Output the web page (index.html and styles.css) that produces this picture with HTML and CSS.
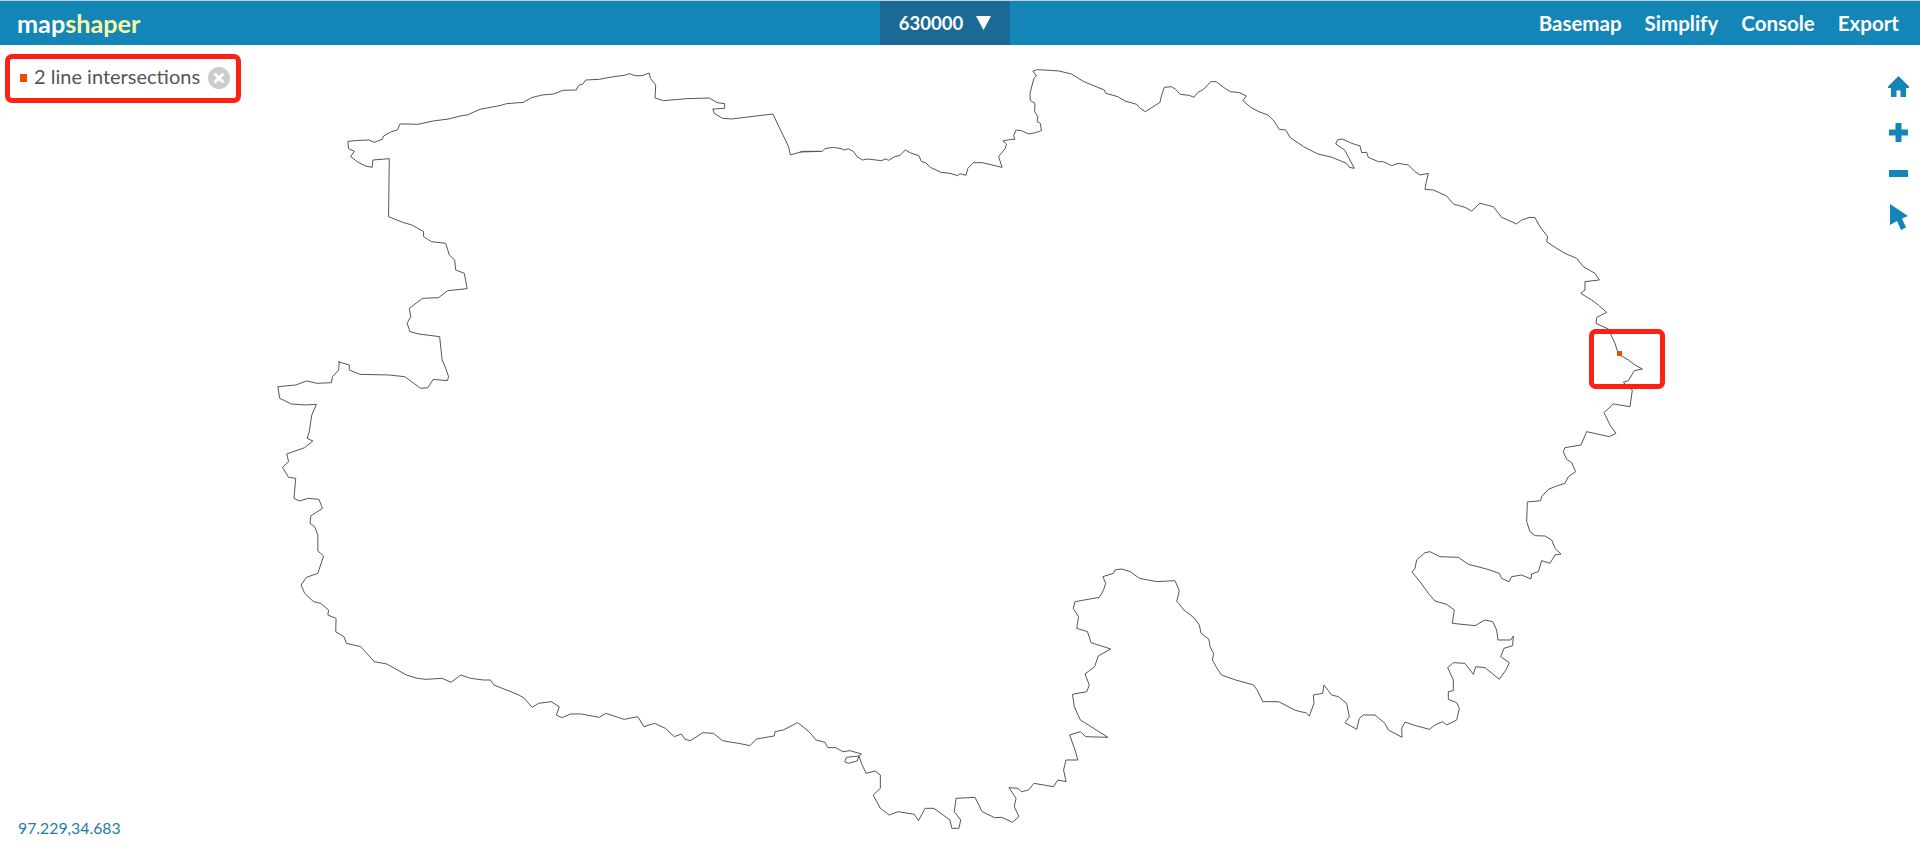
FILE: index.html
```html
<!DOCTYPE html>
<html>
<head>
    <title>mapshaper</title>
    <link rel="stylesheet" href="styles.css">
</head>
<body>
    <div class="page-header">
        <div class="logo">map<span class="logo-accent">shaper</span></div>
        <div class="layer-select">
            <span>630000</span>
            <svg class="layer-arrow" viewBox="0 0 15 14"><polygon points="0,0 15,0 7.5,14"/></svg>
        </div>
        <div class="nav-links">
            <span>Basemap</span>
            <span>Simplify</span>
            <span>Console</span>
            <span>Export</span>
        </div>
    </div>

    <div class="map-canvas">
        <svg class="map-shape" viewBox="0 45 1920 809">
            <!-- outline traced in pieces, each piece in the coordinates of its own crop -->
            <g transform="translate(260 60) scale(.35714 .33333)">
                <polyline class="border" points="360,470 362,296 316,300 314,322 295,318 272,305 254,290 264,274 248,266 246,244 280,241 305,240 320,247 342,238 346,228 368,215 385,210 392,192 415,192 442,193 485,183 528,177 565,167 580,165 616,148 650,141 672,137 690,131 738,127 760,113 790,105 822,102 848,91 886,90 892,76 904,72 912,60 950,58 990,50 1020,46 1035,41 1050,47 1070,47 1090,39 1093,55 1108,75 1106,114 1130,122 1195,116 1258,114 1280,128 1301,131 1301,145 1268,147 1272,160 1295,175 1320,177 1436,162 1480,260 1485,285 1520,274 1568,274"/>
                <polyline class="border" points="218,905 250,915 250,930 280,943 360,945 405,950 450,985 470,983 485,958 525,962 528,950 520,925 510,900 503,830 445,822 420,815 412,790 422,770 418,745 455,715 500,713 525,692 580,686 572,640 548,630 545,600 530,585 520,550 480,545 458,530 458,515 425,495 400,487 360,470"/>
            </g>
            <g transform="translate(800 60) scale(.35714 .33333)">
                <polyline class="border" points="0,276 62,274 70,266 92,262 115,266 125,270 135,266 150,275 160,290 175,300 190,297 212,300 228,302 240,297 248,301 265,290 280,286 295,270 310,279 333,287 340,305 352,308 365,322 395,337 420,340 442,347 448,341 465,346 470,325 485,308 510,308 566,322 556,290 575,265 578,252 568,243 590,238 602,238 598,228 605,210 620,212 640,222 660,218 676,212 673,190 664,185 666,170 657,155 658,130 645,122 644,100 650,75 655,55 662,48 652,33 665,29 700,31 725,33 760,42 795,65 852,90 856,100 890,110 910,123 943,133 950,143 967,155 1008,127 1012,108 1020,82 1040,80 1052,88 1065,103 1090,106 1103,112 1113,98 1130,88 1150,65 1165,65 1190,85 1205,95 1230,98 1250,108 1240,122 1262,142 1285,155 1310,165 1325,180 1342,208 1360,210 1372,232 1410,260 1450,282 1490,292 1530,310 1538,322 1552,325 1540,300 1525,270 1500,252 1505,240 1518,237 1545,250 1568,258"/>
            </g>
            <g transform="translate(1300 130) scale(.33333)">
                <polyline class="border" points="180,47 185,68 200,67 205,82 235,95 250,95 275,107 295,100 325,105 345,125 360,135 385,130 378,160 375,178 400,180 440,198 460,222 495,232 515,243 540,220 580,230 605,262 650,282 665,270 690,262 705,263 720,290 743,320 740,335 765,352 795,370 830,385 850,410 885,430 898,450 855,455 855,480 842,490 875,510 895,525 920,547 890,562 888,580 925,597 945,640 955,672 985,690 1005,705 1027,717 1003,722 985,752 970,757 997,780 990,830 940,822 912,848 930,885 948,910 928,920 860,905 843,945 795,953"/>
            </g>
            <g transform="translate(1300 400) scale(.33333)">
                <polyline class="border" points="795,143 790,155 800,178 815,188 827,215 805,230 795,250 770,258 745,268 725,290 722,302 682,306 680,365 690,395 705,407 735,408 755,420 765,445 783,462 765,465 750,490 725,482 715,515 695,522 693,537 665,525 635,530 627,545 605,535 598,520 560,507 505,493 475,472 420,470 390,455 375,458 350,480 345,505 336,516 360,545 385,580 405,603 440,613 463,630 457,670 525,677 555,660 578,665 590,690 594,720 632,720 640,708 638,737 612,745 602,770 628,788 618,810 598,838 555,803 527,800 520,823 495,790 460,788 443,803 460,840 460,872 445,875 445,898 470,908 478,925 470,960 440,975 428,965 405,975 388,988 340,975 315,966 305,985 306,1012 265,990 255,970 225,945 190,945 178,955 170,988 135,968 148,950 140,910 115,890 95,885 72,855 68,880 40,885 42,910 28,948 18,938 0,935"/>
            </g>
            <g transform="translate(800 550) scale(.35714 .33333)">
                <polyline class="border" points="1400,485 1385,480 1340,455 1296,455 1280,420 1270,405 1220,390 1180,375 1165,350 1155,330 1158,310 1148,290 1145,268 1123,250 1118,225 1105,205 1075,180 1060,160 1055,155 1062,122 1050,92 1000,95 950,85 925,65 900,57 882,60 878,70 848,80 856,100 850,120 838,142 770,155 765,175 780,200 775,235 805,245 815,278 870,297 835,318 825,350 798,372 810,405 803,425 763,433 768,470 785,510 815,530 862,562 800,560 785,545 755,555 770,600 778,630 745,630 738,660 745,695 722,690 710,710 655,700 640,720 620,725 610,715 585,713 605,745 600,770 613,800 595,817 565,802 545,803 510,785 490,742 437,745 432,785 450,810 445,835 425,835 420,810 375,775 350,775 332,812 320,793 275,785 250,795 225,775 205,735 225,715 225,675 210,663 185,670 172,640 165,618 130,622 125,635 135,640 160,633 165,618 172,612 140,602 120,605 100,593 78,593 70,577 45,570 25,545 0,523"/>
            </g>
            <g transform="translate(260 370) scale(.35714 .33333)">
                <polyline class="border" points="1512,1063 1505,1058 1465,1080 1442,1085 1440,1098 1390,1107 1372,1127 1340,1120 1310,1115 1295,1112 1270,1090 1240,1088 1205,1112 1190,1108 1180,1092 1160,1100 1135,1075 1105,1060 1075,1070 1058,1040 1020,1048 968,1030 950,1042 900,1032 870,1032 845,1043 830,1035 838,1010 815,995 780,1000 762,1012 740,985 725,975 655,945 645,930 625,930 590,925 562,915 535,937 510,925 465,928 440,925 410,915 355,882 320,875 282,830 242,820 235,800 212,785 213,745 190,735 192,720 170,700 150,695 125,670 115,645 130,622 162,610 178,558 162,543 162,495 153,470 140,460 142,438 175,415 165,388 135,385 110,393 95,385 100,325 80,322 63,292 80,275 75,252 125,233 148,213 132,205 138,185 145,135 158,103 125,105 88,102 55,85 50,50 100,45 130,33 160,40 200,38 203,20 220,0 222,-25"/>
            </g>
            <rect class="hit-dot" x="1617" y="351" width="5" height="5"/>
            <rect class="mark-box" x="1591.5" y="331.5" width="71" height="55" rx="4"/>
        </svg>

        <div class="intersections">
            <span class="dot"></span>
            <span class="intersections-text">2 line intersections</span>
            <svg class="close-btn" viewBox="0 0 22 22">
                <circle cx="11" cy="11" r="11"/>
                <path d="M6.5 6.5 L15.5 15.5 M15.5 6.5 L6.5 15.5"/>
            </svg>
        </div>

        <div class="map-tools">
            <svg class="tool-home" viewBox="0 0 21 21"><path d="M10.5 0 L21 10.5 V12 H18 V21 H12.5 V14.5 H8.5 V21 H3 V12 H0 V10.5 Z"/></svg>
            <svg class="tool-plus" viewBox="0 0 19 19"><path d="M6.5 0 H12.5 V6.5 H19 V12.5 H12.5 V19 H6.5 V12.5 H0 V6.5 H6.5 Z"/></svg>
            <svg class="tool-minus" viewBox="0 0 19 7"><rect width="19" height="7"/></svg>
            <svg class="tool-pointer" viewBox="0 0 18 26"><path d="M0 0 L18 12 L12 14.5 L16 23.5 L11 26 L7 17 L0 21 Z"/></svg>
        </div>

        <div class="coords">97.229,34.683</div>
    </div>
</body>
</html>
```

FILE: styles.css
```css
html, body {
    height: 100%;
}
body {
    margin: 0;
    display: flex;
    flex-direction: column;
    overflow: hidden;
    background-color: white;
    font-family: Lato, "Open Sans", sans-serif;
}
.page-header {
    height: 44px;
    flex: none;
    display: flex;
    align-items: center;
    position: relative;
    border-top: 1px solid #c8d0d4;
    background-color: #1385b7;
    color: white;
    font-size: 20.5px;
    font-weight: bold;
}
.logo {
    margin-left: 17px;
    font-size: 25.2px;
}
.logo-accent {
    color: #f8f8a4;
}
.layer-select {
    position: absolute;
    left: 880px;
    top: 0;
    width: 130px;
    height: 44px;
    display: flex;
    align-items: center;
    justify-content: center;
    gap: 13px;
    background-color: #1b6a96;
    font-size: 18.5px;
}
.layer-arrow {
    width: 15px;
    height: 14px;
    fill: white;
}
.nav-links {
    margin-left: auto;
    margin-right: 21px;
    display: flex;
    gap: 23px;
}
.map-canvas {
    flex: 1;
    position: relative;
}
.map-shape {
    position: absolute;
    left: 0;
    top: 0;
    width: 1920px;
    height: 809px;
}
.border {
    fill: none;
    stroke: #55555e;
    stroke-width: 1;
    stroke-linejoin: round;
    vector-effect: non-scaling-stroke;
}
.hit-dot {
    fill: #f04a00;
}
.mark-box {
    fill: none;
    stroke: #ff2015;
    stroke-width: 5;
}
.intersections {
    position: absolute;
    left: 5px;
    top: 9px;
    width: 236px;
    height: 49px;
    box-sizing: border-box;
    padding-bottom: 2px;
    display: flex;
    align-items: center;
    border: 5px solid #ff2015;
    border-radius: 7px;
    color: #555;
    font-size: 20px;
}
.dot {
    width: 7px;
    height: 8px;
    margin-left: 10px;
    background-color: #f04a00;
}
.intersections-text {
    margin-left: 7px;
    margin-bottom: 4px;
}
.close-btn {
    width: 22px;
    height: 22px;
    margin-left: auto;
    margin-right: 6px;
}
.close-btn circle {
    fill: #ccc;
}
.close-btn path {
    fill: none;
    stroke: white;
    stroke-width: 3;
}
.map-tools {
    position: absolute;
    right: 11px;
    top: 31px;
    width: 21px;
    display: flex;
    flex-direction: column;
    align-items: center;
    fill: #1385b7;
}
.tool-home {
    width: 21px;
    height: 21px;
}
.tool-plus {
    width: 19px;
    height: 19px;
    margin-top: 26px;
}
.tool-minus {
    width: 19px;
    height: 7px;
    margin-top: 28px;
}
.tool-pointer {
    width: 18px;
    height: 26px;
    margin-top: 27px;
}
.coords {
    position: absolute;
    left: 18px;
    bottom: 17px;
    color: #1d7bab;
    font-size: 15.8px;
}
```
